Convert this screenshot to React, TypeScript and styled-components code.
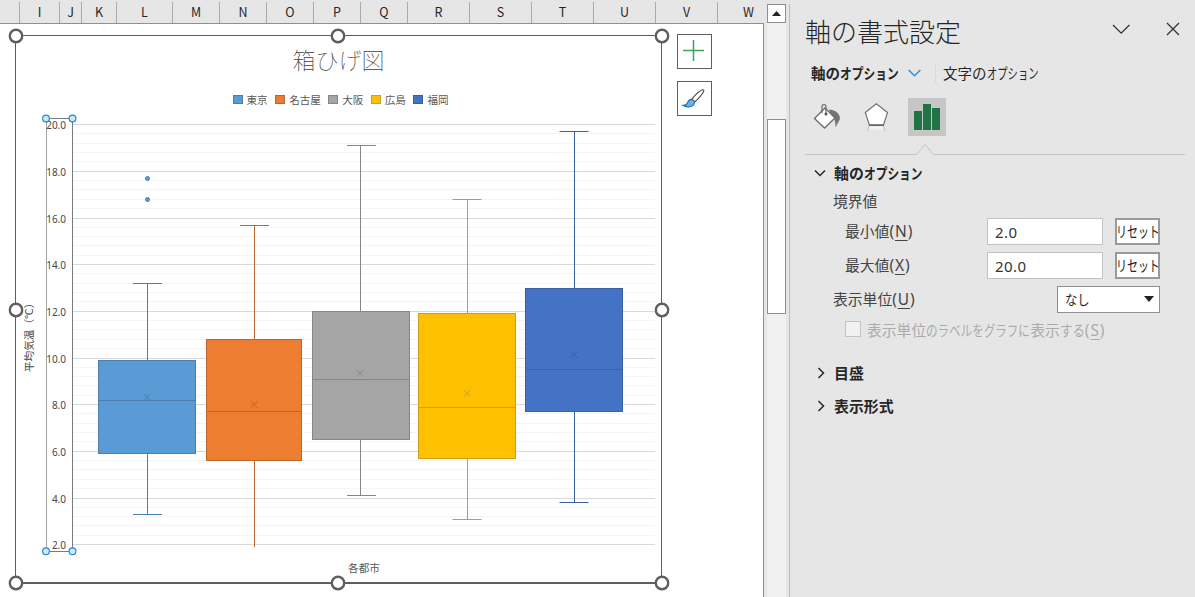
import React from "react";
import styled, { createGlobalStyle } from "styled-components";

const Global = createGlobalStyle`
  * { box-sizing: border-box; }
  body { margin: 0; overflow: hidden; background: #e6e6e6; }
`;

const jp = `"Noto Sans CJK JP", "Noto Sans", sans-serif`;

const Window = styled.div`
  display: flex;
  width: 1195px;
  height: 597px;
  overflow: hidden;
  background: #e6e6e6;
  color: #262626;
  font-family: "Noto Sans", ${jp};
`;

/* ---------- worksheet ---------- */
const Sheet = styled.main`
  display: flex;
  flex-direction: column;
  width: 764px;
  height: 597px;
  flex: none;
`;
const ColumnHeader = styled.div`
  display: flex;
  height: 24px;
  padding-top: 2px;
  overflow: hidden;
  border-bottom: 1px solid #8f8f8f;
  background: #e6e6e6;
`;
const ColumnName = styled.div<{ $w: number }>`
  flex: none;
  width: ${(p) => p.$w}px;
  border-right: 1px solid #ababab;
  font: 12.5px/20px ${jp};
  text-align: center;
  color: #262626;
`;
const Cells = styled.div`
  display: flex;
  align-items: flex-start;
  gap: 15px;
  flex: 1;
  padding: 11px 0 0 15px;
  background: #fff;
  border-right: 1px solid #8f8f8f;
`;
const ChartFrame = styled.section`
  position: relative;
  display: flex;
  flex-direction: column;
  align-items: center;
  flex: none;
  width: 647px;
  height: 549px;
  border: 1px solid #5f5f5f;
  border-bottom-width: 2px;
  font-family: ${jp};
  color: #595959;
`;
const ChartTitle = styled.h1`
  margin: 6px 0 0;
  height: 34px;
  font-size: 23px;
  line-height: 34px;
  font-weight: 100;
  color: #3c3c3c;
`;
const Legend = styled.div`
  display: flex;
  gap: 7.6px;
  height: 16px;
  margin: 16px 0 4px 4px;
`;
const LegendItem = styled.div`
  display: flex;
  align-items: center;
  gap: 4px;
  font-size: 10.5px;
  line-height: 16px;
`;
const Swatch = styled.i<{ $fill: string; $edge: string }>`
  width: 10px;
  height: 9px;
  margin-top: -1px;
  background: ${(p) => p.$fill};
  border: 1px solid ${(p) => p.$edge};
`;
const Plot = styled.svg`
  display: block;
  flex: none;
  width: 645px;
  height: 446px;
`;
const CategoryTitle = styled.div`
  margin: 2px 0 0 51px;
  font-size: 10.6px;
  line-height: 16px;
`;
const Handle = styled.i<{ $x: number; $y: number }>`
  position: absolute;
  left: ${(p) => p.$x}px;
  top: ${(p) => p.$y}px;
  width: 14px;
  height: 14px;
  margin: -7px 0 0 -7px;
  border: 2.5px solid #5f5f5f;
  border-radius: 50%;
  background: #fff;
  box-shadow: 0 0 0 0.4px #5f5f5f;
`;
const ChartButtons = styled.div`
  display: flex;
  flex-direction: column;
  gap: 12px;
  margin-top: -1px;
`;
const ChartButton = styled.button`
  display: block;
  width: 35px;
  height: 35px;
  padding: 0;
  border: 1px solid #5f5f5f;
  background: #fff;
  svg { display: block; }
`;

/* ---------- scroll bar ---------- */
const ScrollColumn = styled.div`
  width: 26px;
  flex: none;
  display: flex;
  padding: 4px 0 0 3px;
`;
const Track = styled.div`
  width: 19px;
  background: #f1f1f1;
  margin-right: 3px;
`;
const ScrollButton = styled.div`
  display: flex;
  align-items: center;
  justify-content: center;
  height: 19px;
  border: 1px solid #8f8f8f;
  background: #fff;
`;
const Thumb = styled.div`
  height: 195px;
  margin-top: 96px;
  border: 1px solid #8f8f8f;
  background: #fff;
`;
const Divider = styled.div`
  width: 1px;
  background: #bcbcbc;
`;

/* ---------- format pane ---------- */
const Pane = styled.aside`
  flex: 1;
  display: flex;
  flex-direction: column;
  padding: 8px 10px 0 15px;
`;
const PaneHeader = styled.header`
  display: flex;
  align-items: center;
  height: 46px;
`;
const PaneTitle = styled.h2`
  flex: 1;
  margin: 0;
  padding-bottom: 1px;
  font: 300 26px/44px ${jp};
`;
const HeaderIcons = styled.svg`
  margin-right: 4px;
  margin-bottom: 5px;
`;
const Tabs = styled.div`
  display: flex;
  align-items: center;
  height: 38px;
  padding-left: 6px;
`;
const Tab = styled.div<{ $active?: boolean }>`
  font: ${(p) => (p.$active ? 700 : 400)} 14.5px/38px ${jp};
  white-space: nowrap;
`;
const Kana = styled.span<{ $w: number; $s: number }>`
  display: inline-block;
  width: ${(p) => p.$w}px;
  white-space: nowrap;
  transform: scaleX(${(p) => p.$s});
  transform-origin: 0 50%;
`;
const TabChevron = styled.svg`
  margin: 0 14px 0 9px;
`;
const TabRule = styled.i`
  width: 1px;
  height: 19px;
  margin-right: 7px;
  background: #dadada;
`;
const IconTabs = styled.div`
  display: flex;
  align-items: center;
  height: 50px;
  padding-left: 3px;
`;
const IconTab = styled.div<{ $active?: boolean }>`
  width: 38px;
  height: 38px;
  margin-right: 12px;
  background: ${(p) => (p.$active ? "#c6c6c6" : "none")};
  svg { display: block; }
`;
const Notch = styled.svg`
  display: block;
  height: 14px;
`;
const SectionHeading = styled.h3<{ $h: number }>`
  display: flex;
  align-items: center;
  height: ${(p) => p.$h}px;
  margin: 0;
  padding-left: 8px;
  font: 700 14.9px/24px ${jp};
  svg { margin-right: 6px; }
`;
const Row = styled.div<{ $indent: number; $h: number }>`
  display: flex;
  align-items: center;
  height: ${(p) => p.$h}px;
  padding: 0 25px 0 ${(p) => p.$indent}px;
  font: 14.8px/24px ${jp};
  color: #444;
`;
const Caption = styled.span`
  padding-bottom: 2px;
`;
const Label = styled.label<{ $muted?: boolean }>`
  flex: 1;
  white-space: nowrap;
  color: ${(p) => (p.$muted ? "#ababab" : "#444")};
`;
const Shortcut = styled.span`
  font: 15.5px/20px "Noto Sans", sans-serif;
  letter-spacing: 0.9px;
`;
const Key = styled.span`
  text-decoration: underline;
  text-underline-offset: 3px;
  text-decoration-thickness: 1px;
`;
const Field = styled.div`
  width: 116px;
  height: 27px;
  margin-right: 12px;
  padding-left: 7px;
  border: 1px solid #c3c3c3;
  background: #fff;
  font: 15px/26px "Noto Sans", sans-serif;
  letter-spacing: 0.4px;
  color: #333;
`;
const Reset = styled.button`
  width: 45px;
  height: 27px;
  padding: 0;
  overflow: hidden;
  border: 2px solid #9a9a9a;
  background: #fff;
  color: #222;
  font: 15px/22px ${jp};
  text-align: left;
`;
const ResetText = styled.span`
  display: inline-block;
  margin-left: -1.5px;
  white-space: nowrap;
  transform: scaleX(0.73);
  transform-origin: 0 50%;
`;
const Select = styled.div`
  display: flex;
  align-items: center;
  justify-content: space-between;
  width: 103px;
  height: 27px;
  padding: 0 5px 0 7px;
  border: 1px solid #8f8f8f;
  background: #fff;
  color: #262626;
  font: 14px/24px ${jp};
`;
const CheckBox = styled.i`
  width: 16px;
  height: 16px;
  margin: 0 6px 2px 0;
  border: 1px solid #c3c3c3;
  background: #f1f1f1;
`;

const columns: [string, number][] = [
  ["", 20], ["I", 40], ["J", 22], ["K", 35], ["L", 56], ["M", 47], ["N", 47], ["O", 47],
  ["P", 47], ["Q", 47], ["R", 62], ["S", 62], ["T", 62], ["U", 62], ["V", 62], ["W", 62],
];

interface Series {
  name: string;
  fill: string;
  edge: string;
  center: number;
  left: number;
  width: number;
  top: number;
  bottom: number;
  median: number;
  mean: number;
  high: number;
  low: number;
  capLeft: number;
  cappedLow: boolean;
  outliers: number[];
}

const series: Series[] = [
  { name: "東京", fill: "#5b9bd5", edge: "#4a7eae", center: 147, capLeft: 133, left: 98, width: 98, top: 360, bottom: 454, median: 400, mean: 397, high: 283, low: 514, cappedLow: true, outliers: [178.5, 199.5] },
  { name: "名古屋", fill: "#ed7d31", edge: "#b9672f", center: 254, capLeft: 240, left: 206, width: 96, top: 339, bottom: 461, median: 411, mean: 404, high: 225, low: 546, cappedLow: false, outliers: [] },
  { name: "大阪", fill: "#a5a5a5", edge: "#868686", center: 360, capLeft: 347, left: 312, width: 98, top: 311, bottom: 440, median: 379, mean: 373, high: 145, low: 495, cappedLow: true, outliers: [] },
  { name: "広島", fill: "#ffc000", edge: "#c9a01c", center: 467, capLeft: 452.5, left: 418, width: 98, top: 313, bottom: 459, median: 407, mean: 393, high: 199, low: 519, cappedLow: true, outliers: [] },
  { name: "福岡", fill: "#4472c4", edge: "#3a609f", center: 574, capLeft: 559.5, left: 525, width: 98, top: 288, bottom: 412, median: 369, mean: 354, high: 131, low: 502, cappedLow: true, outliers: [] },
];

const valueY = (v: number) => 544.5 - (v - 2) * 23.333;
const ticks = [2, 4, 6, 8, 10, 12, 14, 16, 18, 20];
const minor = Array.from({ length: 45 }, (_, i) => 2 + i * 0.4).filter((_, i) => i % 5 !== 0);

function Box({ s }: { s: Series }) {
  const x = s.center + 0.5;
  return (
    <g stroke={s.edge} fill="none">
      <path d={`M${x} ${s.high}V${s.top}M${x} ${s.bottom}V${s.low + 1}`} />
      <path d={`M${s.capLeft} ${s.high + 0.5}h29`} />
      {s.cappedLow && <path d={`M${s.capLeft} ${s.low + 0.5}h29`} />}
      <rect x={s.left + 0.5} y={s.top + 0.5} width={s.width - 1} height={s.bottom - s.top - 1} fill={s.fill} />
      <path d={`M${s.left} ${s.median + 0.5}h${s.width}`} />
      <path d={`M${x - 3.8} ${s.mean - 3}l6.8 6.8m0 -6.8l-6.8 6.8`} />
      {s.outliers.map((y) => (
        <circle key={y} cx={x} cy={y} r="2" fill={s.fill} />
      ))}
    </g>
  );
}

function Chevron({ open }: { open?: boolean }) {
  return (
    <svg width="15" height="14" viewBox="0 0 15 14" fill="none" stroke="#262626" strokeWidth="1.5">
      <path d={open ? "M2 4.5l5 5 5-5" : "M5.5 2l5 5-5 5"} />
    </svg>
  );
}

export default function App() {
  return (
    <>
      <Global />
      <Window>
        <Sheet>
          <ColumnHeader>
            {columns.map(([name, w]) => (
              <ColumnName key={name} $w={w}>{name}</ColumnName>
            ))}
          </ColumnHeader>
          <Cells>
            <ChartFrame>
              <ChartTitle>箱ひげ図</ChartTitle>
              <Legend>
                {series.map((s) => (
                  <LegendItem key={s.name}>
                    <Swatch $fill={s.fill} $edge={s.edge} />
                    {s.name}
                  </LegendItem>
                ))}
              </Legend>
              <Plot viewBox="16 112 645 446">
                {minor.map((v) => (
                  <path key={v} d={`M73 ${Math.floor(valueY(v)) + 0.5}H655`} stroke="#f4f4f4" />
                ))}
                {ticks.map((v) => (
                  <path key={v} d={`M73 ${Math.floor(valueY(v) + 0.2) + 0.5}H655`} stroke="#d9d9d9" />
                ))}
                {series.map((s) => (
                  <Box key={s.name} s={s} />
                ))}
                <path d="M46.5 118V551" stroke="#a3a3a3" />
                <path d="M46 118.5H72.5V551.5H46" stroke="#7a7a7a" fill="none" />
                {ticks.map((v) => (
                  <text key={v} x="66" y={valueY(v) + 4.9} textAnchor="end" fontFamily="Noto Sans, sans-serif" fontSize="10" fill="#484848">
                    {v.toFixed(1)}
                  </text>
                ))}
                {[[46, 118.5], [72.5, 118.5], [46, 551.3], [72.5, 551.3]].map(([x, y]) => (
                  <circle key={`${x}-${y}`} cx={x} cy={y} r="3.4" fill="#cce8fb" stroke="#2f87c6" strokeWidth="1.2" />
                ))}
                <text transform="translate(33 372) rotate(-90)" fontSize="10.6" fill="#484848">
                  <tspan>平均気温</tspan>
                  <tspan x="42.5">（℃）</tspan>
                </text>
              </Plot>
              <CategoryTitle>各都市</CategoryTitle>
              {[[0, 0], [322, 0], [646, 0], [0, 274], [646, 274], [0, 547], [322, 547], [646, 547]].map(([x, y]) => (
                <Handle key={`${x}-${y}`} $x={x} $y={y} />
              ))}
            </ChartFrame>
            <ChartButtons>
              <ChartButton>
                <svg width="33" height="33" viewBox="0 0 33 33">
                  <path d="M5 15.5h21M15.5 5v21" stroke="#3aa757" strokeWidth="1.5" />
                </svg>
              </ChartButton>
              <ChartButton>
                <svg width="33" height="33" viewBox="0 0 33 33">
                  <path d="M13.8 17.2C17.5 12.6 22 8.6 24.4 7.8c1.3-.4 1.8.4 1.2 1.6-1.3 2.6-5 7-8.8 10.4z" fill="#fff" stroke="#4a4a4a" strokeWidth="1.1" />
                  <path d="M5 23.3c2.4.1 3.7-.7 4.5-2.6.9-2.3 2.5-3.6 4.5-3.2 2.1.5 3 2.2 2.3 4.1-1.2 3.2-7.2 4.5-11.3 1.7z" fill="#6cb2ee" stroke="#1d6fa8" strokeWidth="1.1" />
                </svg>
              </ChartButton>
            </ChartButtons>
          </Cells>
        </Sheet>

        <ScrollColumn>
          <Track>
            <ScrollButton>
              <svg width="9" height="5" viewBox="0 0 9 5"><path d="M0 5l4.5-5L9 5z" fill="#222" /></svg>
            </ScrollButton>
            <Thumb />
          </Track>
          <Divider />
        </ScrollColumn>

        <Pane>
          <PaneHeader>
            <PaneTitle>軸の書式設定</PaneTitle>
            <HeaderIcons width="69" height="18" viewBox="0 0 69 18" fill="none" stroke="#333" strokeWidth="1.3">
              <path d="M1 5l8.2 8.2L17.4 5M55 3l12 12M67 3L55 15" />
            </HeaderIcons>
          </PaneHeader>
          <Tabs>
            <Tab $active>軸の<Kana $w={59} $s={0.81}>オプション</Kana></Tab>
            <TabChevron width="13" height="8" viewBox="0 0 13 8" fill="none" stroke="#2f8fd3" strokeWidth="1.5">
              <path d="M.7 1l5.8 5.8L12.3 1" />
            </TabChevron>
            <TabRule />
            <Tab>文字の<Kana $w={54} $s={0.71}>オプション</Kana></Tab>
          </Tabs>
          <IconTabs>
            <IconTab>
              <svg width="38" height="38" viewBox="0 0 38 38">
                <path d="M21 11.500C28 12 32 15.500 32 21l-4.500 8.500c.3-5.500-.5-9-5-13z" fill="#757575" />
                <path d="M6.500 20.500L17 10l10 10-10.500 10z" fill="#fff" stroke="#6b6b6b" strokeWidth="1.3" />
                <path d="M14 15V9q0-2.500 2-2.500t2 2.500v6.500" fill="none" stroke="#6b6b6b" strokeWidth="1.2" />
                <circle cx="18" cy="16" r="1.5" fill="#555" />
              </svg>
            </IconTab>
            <IconTab>
              <svg width="38" height="38" viewBox="0 0 38 38">
                <defs>
                  <linearGradient id="fade" x1="0" x2="0" y1="0" y2="1">
                    <stop offset="0" stopColor="#fff" />
                    <stop offset="1" stopColor="#e6e6e6" />
                  </linearGradient>
                </defs>
                <path d="M11 27h14l2 6H9z" fill="url(#fade)" />
                <path d="M11 28l-1.5 5M25.5 28l1.5 5" stroke="#c0c0c0" />
                <path d="M18.3 5.8L29.5 14.5 25.5 27H11.3L7.3 14.5z" fill="#fff" stroke="#757575" strokeWidth="1.2" />
                <path d="M11 27.2h15" stroke="#6b6b6b" strokeWidth="1.8" />
              </svg>
            </IconTab>
            <IconTab $active>
              <svg width="38" height="38" viewBox="0 0 38 38" fill="#217346">
                <path d="M6 13h8v19H6zM15 6h8v26h-8zM24 10h8v22h-8z" />
              </svg>
            </IconTab>
          </IconTabs>
          <Notch width="380" height="14" viewBox="0 0 380 14">
            <path d="M0 12.5H111.5L120 2.5l8.5 10H380" fill="none" stroke="#c3c3c3" />
          </Notch>

          <SectionHeading $h={34}>
            <Chevron open />
            <span>軸の<Kana $w={60} $s={0.785}>オプション</Kana></span>
          </SectionHeading>
          <Row $indent={28} $h={24}><Caption>境界値</Caption></Row>
          <Row $indent={40} $h={34}>
            <Label>最小値<Shortcut>(<Key>N</Key>)</Shortcut></Label>
            <Field>2.0</Field>
            <Reset><ResetText>リセット</ResetText></Reset>
          </Row>
          <Row $indent={40} $h={34}>
            <Label>最大値<Shortcut>(<Key>X</Key>)</Shortcut></Label>
            <Field>20.0</Field>
            <Reset><ResetText>リセット</ResetText></Reset>
          </Row>
          <Row $indent={28} $h={34}>
            <Label>表示単位<Shortcut>(<Key>U</Key>)</Shortcut></Label>
            <Select>
              <Kana $w={25} $s={0.88}>なし</Kana>
              <svg width="10" height="6" viewBox="0 0 10 6"><path d="M0 0h10L5 6z" fill="#222" /></svg>
            </Select>
          </Row>
          <Row $indent={40} $h={27}>
            <CheckBox />
            <Label $muted>
              表示単位<Kana $w={104} $s={0.78}>のラベルをグラフに</Kana>表示<Kana $w={25} $s={0.84}>する</Kana><Shortcut>(<Key>S</Key>)</Shortcut>
            </Label>
          </Row>
          <SectionHeading $h={60}><Chevron />目盛</SectionHeading>
          <SectionHeading $h={6}><Chevron />表示形式</SectionHeading>
        </Pane>
      </Window>
    </>
  );
}
